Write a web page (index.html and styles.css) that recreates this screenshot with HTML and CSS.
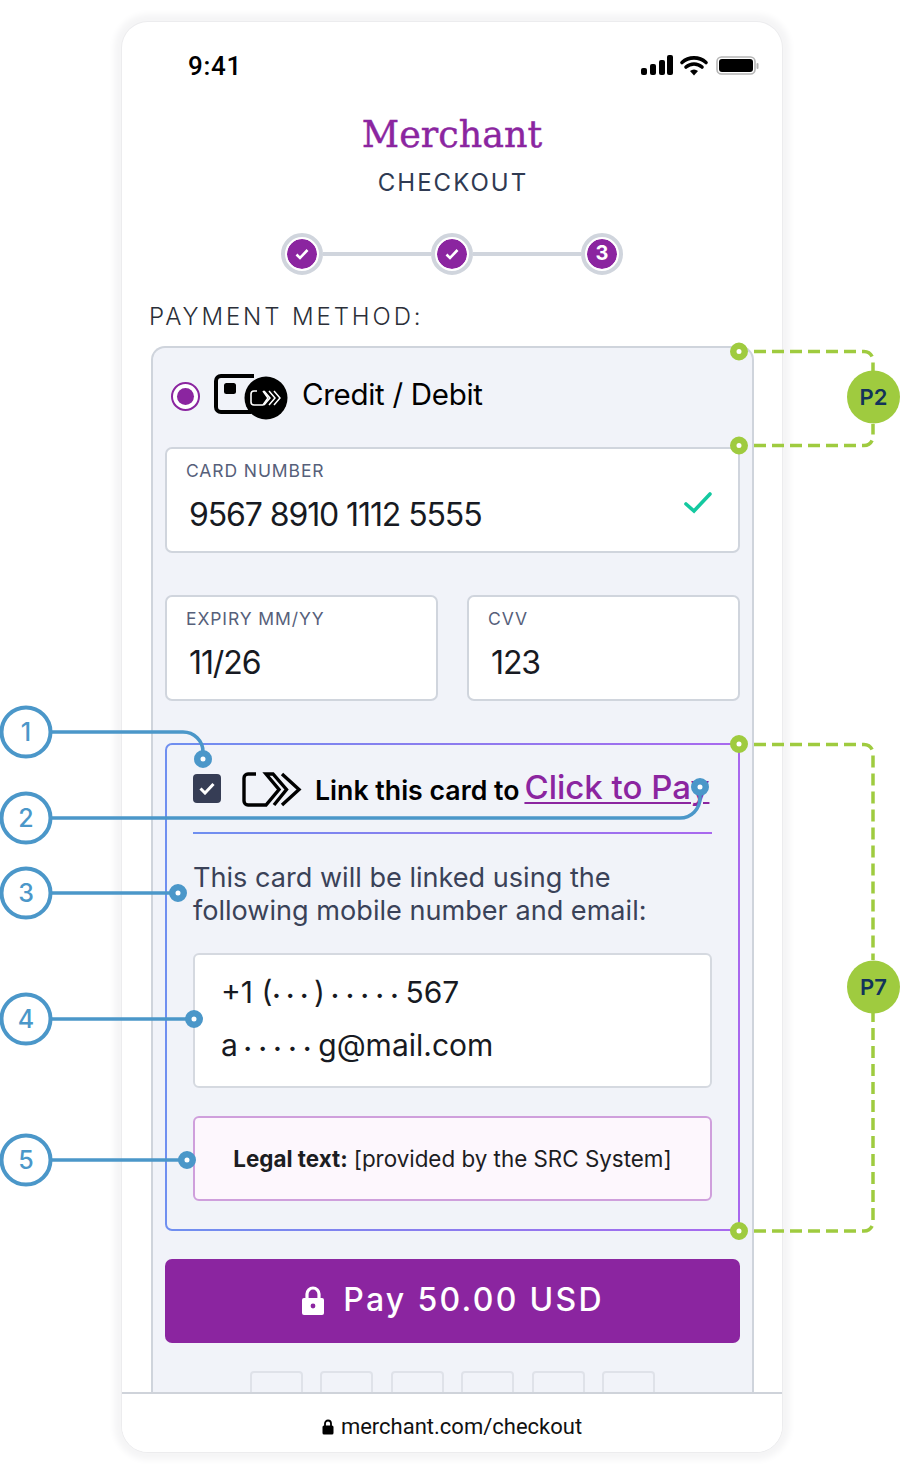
FILE: index.html
```html
<!DOCTYPE html>
<html lang="en">
<head>
<meta charset="utf-8">
<title>Merchant checkout</title>
<link rel="stylesheet" href="styles.css">
</head>
<body>
<main class="canvas">
  <div class="phone">
    <div class="status">
      <span class="time">9:41</span>
      <svg class="status-icons" width="118" height="24" viewBox="0 0 118 24">
        <rect x="0" y="14" width="6" height="7" rx="2" fill="#000"/>
        <rect x="9" y="10" width="6" height="11" rx="2" fill="#000"/>
        <rect x="18" y="6" width="6" height="15" rx="2" fill="#000"/>
        <rect x="26" y="1" width="6" height="20" rx="2" fill="#000"/>
        <path d="M41 8.500a18 18 0 0 1 24 0M45 13a12 12 0 0 1 16 0" fill="none" stroke="#000" stroke-width="3.600" stroke-linecap="round"/>
        <path d="M49 17a6 6 0 0 1 8 0l-4 4.500z" fill="#000"/>
        <rect x="76" y="3" width="38" height="17" rx="4.500" fill="none" stroke="#b5b5b5" stroke-width="1.600"/>
        <rect x="78" y="5" width="34" height="13" rx="3" fill="#000"/>
        <rect x="115.500" y="9" width="2" height="6" rx="1" fill="#b5b5b5"/>
      </svg>
    </div>
    <div class="brand">Merchant</div>
    <div class="subtitle">CHECKOUT</div>
    <div class="stepper">
      <span class="step"><svg width="14" height="12" viewBox="0 0 14 12"><path d="M1.500 6.500l3.500 3.500 7.500-8" fill="none" stroke="#fff" stroke-width="2.600"/></svg></span>
      <span class="step-line"></span>
      <span class="step"><svg width="14" height="12" viewBox="0 0 14 12"><path d="M1.500 6.500l3.500 3.500 7.500-8" fill="none" stroke="#fff" stroke-width="2.600"/></svg></span>
      <span class="step-line"></span>
      <span class="step step-num">3</span>
    </div>
    <div class="section-label">PAYMENT METHOD:</div>

    <section class="panel">
      <div class="method">
        <span class="radio"><span class="radio-dot"></span></span>
        <svg class="card-icon" width="74" height="48" viewBox="0 0 74 48">
          <path d="M40 3H7a5 5 0 0 0-5 5v26a5 5 0 0 0 5 5h30" fill="none" stroke="#000" stroke-width="4"/>
          <rect x="10" y="10" width="12" height="11" rx="2.500" fill="#000"/>
          <circle cx="52" cy="25" r="21.500" fill="#000"/>
          <path d="M43 18h-3a3 3 0 0 0-3 3v8a3 3 0 0 0 3 3h9l5-7-5-7" fill="none" stroke="#fff" stroke-width="1.600"/>
          <path d="M50 18l6 7-6 7M55 18l6 7-6 7M60 18l6 7-6 7" fill="none" stroke="#fff" stroke-width="1.500"/>
        </svg>
        <span class="method-name">Credit / Debit</span>
      </div>

      <div class="field field-wide">
        <span class="field-label">CARD NUMBER</span>
        <span class="field-value">9567 8910 1112 5555</span>
        <svg class="field-check" width="28" height="22" viewBox="0 0 28 22"><path d="M2 12l8 7L26 2" fill="none" stroke="#14c9a0" stroke-width="3.600" stroke-linecap="round"/></svg>
      </div>

      <div class="field-row">
        <div class="field">
          <span class="field-label">EXPIRY MM/YY</span>
          <span class="field-value">11/26</span>
        </div>
        <div class="field">
          <span class="field-label">CVV</span>
          <span class="field-value">123</span>
        </div>
      </div>

      <div class="link-box">
        <div class="link-row">
          <span class="checkbox"><svg width="16" height="13" viewBox="0 0 16 13"><path d="M1.500 6.500l4.500 4.500 8.500-9" fill="none" stroke="#fff" stroke-width="3"/></svg></span>
          <svg class="c2p-logo" width="75" height="50" viewBox="0 0 75 50">
            <path d="M21 10H13a4 4 0 0 0-4 4v23a4 4 0 0 0 4 4h18l13-15.500L31 10h7l13.500 15.500L39 41" fill="none" stroke="#000" stroke-width="3.400"/>
            <path d="M47 10l17 15.500L47 41" fill="none" stroke="#000" stroke-width="3.400"/>
          </svg>
          <span class="link-text">Link this card to</span>
          <a class="link-brand">Click to Pay</a>
        </div>
        <div class="link-rule"></div>
        <p class="link-copy">This card will be linked using the<br>following mobile number and email:</p>
        <div class="contact">
          <span>+1 (<span class="mask mask-in">•••</span>)<span class="mask">•••••</span>567</span>
          <span>a<span class="mask">•••••</span>g@mail.com</span>
        </div>
        <div class="legal"><b>Legal text:</b> [provided by the SRC System]</div>
      </div>

      <button class="pay">
        <svg width="24" height="30" viewBox="0 0 24 30"><path d="M6 13V8a6 6 0 0 1 12 0v5" fill="none" stroke="#fff" stroke-width="3.200"/><path d="M3 12h18a2 2 0 0 1 2 2v13a2 2 0 0 1-2 2H3a2 2 0 0 1-2-2V14a2 2 0 0 1 2-2z" fill="#fff"/><circle cx="12" cy="20" r="2.400" fill="#8b25a0"/></svg>
        <span class="pay-label">Pay 50.00 USD</span>
      </button>

      <div class="logos">
        <span class="logo-slot"></span><span class="logo-slot"></span><span class="logo-slot"></span><span class="logo-slot"></span><span class="logo-slot"></span><span class="logo-slot"></span>
      </div>
    </section>

    <footer class="address">
      <svg width="12" height="16" viewBox="0 0 12 16"><path d="M3 7V4.500a3 3 0 0 1 6 0V7" fill="none" stroke="#000" stroke-width="1.800"/><rect x="0.500" y="6.500" width="11" height="9" rx="1.500" fill="#000"/></svg>
      <span>merchant.com/checkout</span>
    </footer>
  </div>

  <svg class="annotations" width="900" height="1474" viewBox="0 0 900 1474">
    <g class="blue-lines">
      <path d="M52 732H183a20 20 0 0 1 20 20v7"/>
      <path d="M52 818H680a20 20 0 0 0 20-20v-11"/>
      <path d="M52 893H178"/>
      <path d="M52 1019H194"/>
      <path d="M52 1160H187"/>
    </g>
    <g class="blue-ring">
      <circle cx="26" cy="732" r="24.500"/>
      <circle cx="26" cy="818" r="24.500"/>
      <circle cx="26" cy="893" r="24.500"/>
      <circle cx="26" cy="1019" r="24.500"/>
      <circle cx="26" cy="1160" r="24.500"/>
    </g>
    <g class="blue-num">
      <text x="26" y="741">1</text>
      <text x="26" y="827">2</text>
      <text x="26" y="902">3</text>
      <text x="26" y="1028">4</text>
      <text x="26" y="1169">5</text>
    </g>
    <g class="blue-dot">
      <circle cx="203" cy="759" r="5.750"/>
      <circle cx="700" cy="787" r="5.750"/>
      <circle cx="178" cy="893" r="5.750"/>
      <circle cx="194" cy="1019" r="5.750"/>
      <circle cx="187" cy="1160" r="5.750"/>
    </g>
    <g class="green-lines">
      <path d="M754 351.500H864a9 9 0 0 1 9 9V372"/>
      <path d="M754 445.500H864a9 9 0 0 0 9-9V424"/>
      <path d="M754 744.500H864a9 9 0 0 1 9 9V960"/>
      <path d="M754 1231H864a9 9 0 0 0 9-9V1012"/>
    </g>
    <g class="green-dot">
      <circle cx="739" cy="351.500" r="5.750"/>
      <circle cx="739" cy="445.500" r="5.750"/>
      <circle cx="739" cy="744" r="5.750"/>
      <circle cx="739" cy="1231" r="5.750"/>
    </g>
    <g class="green-badge">
      <circle cx="873.500" cy="397" r="26.500"/>
      <circle cx="873.500" cy="987" r="26.500"/>
    </g>
    <g class="badge-text">
      <text x="873.500" y="405">P2</text>
      <text x="873.500" y="995">P7</text>
    </g>
  </svg>
</main>
</body>
</html>
```

FILE: styles.css
```css
* { box-sizing: border-box; }

html, body { margin: 0; background: #fff; }

body { font-family: "Inter", "Liberation Sans", sans-serif; color: #000; }

.canvas {
  position: relative;
  width: 900px;
  height: 1474px;
  padding: 22px 118px 22px 122px;
}

.phone {
  width: 660px;
  height: 1430px;
  display: flex;
  flex-direction: column;
  background: #fff;
  border-radius: 26px;
  box-shadow: 0 0 0 1px #ececee, 0 0 6px 8px #f5f5f6;
  overflow: hidden;
}

.status {
  flex: none;
  height: 88px;
  display: flex;
  align-items: center;
  justify-content: space-between;
  padding: 0 23px 0 66px;
}

.time {
  font: 500 26px/1 "Roboto", "Liberation Sans", sans-serif;
  letter-spacing: 0.700px;
}

.status-icons { display: block; }

.brand {
  flex: none;
  height: 49px;
  text-align: center;
  font: 400 36.500px/50px "DejaVu Serif", "Liberation Serif", serif;
  -webkit-text-stroke: 0.400px #8b25a0;
  color: #8b25a0;
}

.subtitle {
  flex: none;
  height: 48px;
  padding-left: 2px;
  text-align: center;
  font: 400 24px/48px "Inter", sans-serif;
  letter-spacing: 2px;
  color: #2f3a52;
}

.stepper {
  flex: none;
  height: 42px;
  margin-top: 26px;
  display: flex;
  align-items: center;
  justify-content: center;
}

.step {
  width: 42px;
  height: 42px;
  flex: none;
  display: flex;
  align-items: center;
  justify-content: center;
  background: #8b25a0;
  background-clip: padding-box;
  border: 6px solid #fff;
  border-radius: 50%;
  outline: 4px solid #d0d5dd;
  outline-offset: -4px;
  color: #fff;
  font: 700 20px/1 "Inter", sans-serif;
}

.step-num { padding-bottom: 3px; }

.step-line {
  flex: none;
  width: 108px;
  height: 4px;
  background: #d0d5dd;
}

.section-label {
  flex: none;
  margin: 23px 0 10px 27px;
  height: 38px;
  font: 300 24px/38px "Inter", sans-serif;
  letter-spacing: 2.900px;
  color: #2b2f38;
}

.panel {
  flex: 1 1 0;
  min-height: 0;
  margin: 0 28px 0 29px;
  padding: 0 12px;
  background: #f1f3f9;
  border: 2px solid #cfd4dc;
  border-bottom: 0;
  border-radius: 14px 14px 0 0;
  overflow: hidden;
}

.method {
  height: 99px;
  display: flex;
  align-items: center;
  padding: 0 0 2px 6px;
}

.radio {
  width: 29px;
  height: 29px;
  flex: none;
  display: flex;
  align-items: center;
  justify-content: center;
  background: #fff;
  border: 2px solid #8b25a0;
  border-radius: 50%;
}

.radio-dot {
  width: 17px;
  height: 17px;
  background: #8b25a0;
  border-radius: 50%;
}

.card-icon { margin-left: 14px; flex: none; }

.method-name {
  margin: 0 0 5px 14px;
  font-size: 29.500px;
  letter-spacing: -0.300px;
}

.field {
  position: relative;
  display: flex;
  flex-direction: column;
  height: 106px;
  padding: 10px 20px 0 19px;
  background: #fff;
  border: 2px solid #d0d5dd;
  border-radius: 7px;
}

.field-wide { margin-bottom: 42px; }

.field-row {
  display: grid;
  grid-template-columns: 273px 273px;
  column-gap: 29px;
}

.field-label {
  height: 24px;
  font-size: 17.500px;
  line-height: 24px;
  letter-spacing: 0.900px;
  color: #56607a;
}

.field-value {
  margin: 10px 0 0 3px;
  font-size: 32px;
  line-height: 44px;
  letter-spacing: -1.100px;
  color: #171a22;
}

.field-check { position: absolute; right: 26px; top: 43px; }

.link-box {
  height: 488px;
  margin: 42px 0 28px;
  padding: 0 26px;
  background: linear-gradient(#f1f3f9, #f1f3f9) padding-box, linear-gradient(90deg, #6f8ff0, #a968ee) border-box;
  border: 2px solid transparent;
  border-radius: 7px;
}

.link-row {
  height: 87px;
  display: flex;
  align-items: center;
}

.checkbox {
  width: 28px;
  height: 29px;
  flex: none;
  display: flex;
  align-items: center;
  justify-content: center;
  background: #363d55;
  border-radius: 4px;
}

.c2p-logo { flex: none; margin: 0 5px 0 14px; }

.link-text {
  padding-top: 2px;
  font-size: 26.700px;
  font-weight: 600;
  white-space: nowrap;
}

.link-brand {
  margin: 0 0 4px 5px;
  font-size: 33px;
  font-weight: 500;
  color: #8b25a0;
  text-decoration: underline;
  text-decoration-thickness: 2px;
  text-underline-offset: 3px;
  white-space: nowrap;
}

.link-rule {
  height: 2px;
  background: linear-gradient(90deg, #6f8ff0, #a968ee);
}

.link-copy {
  margin: 27px 0 0;
  font-size: 27.100px;
  line-height: 33px;
  color: #3a4258;
  white-space: nowrap;
}

.contact {
  height: 135px;
  margin-top: 26px;
  padding: 15px 26px 0;
  display: flex;
  flex-direction: column;
  gap: 6px;
  background: #fff;
  border: 2px solid #d5d9e0;
  border-radius: 6px;
  font-size: 30px;
  line-height: 44px;
  color: #171a22;
  white-space: nowrap;
}

.mask {
  margin-left: 6px;
  font-size: 14px;
  letter-spacing: 7px;
  vertical-align: 3px;
}

.mask-in { margin-left: 0; letter-spacing: 6px; }

.legal {
  height: 85px;
  margin-top: 28px;
  display: flex;
  align-items: center;
  justify-content: center;
  gap: 6px;
  background: #fdf7fd;
  border: 2px solid #cf9fdc;
  border-radius: 6px;
  font-size: 22.400px;
  color: #1c1d22;
  white-space: nowrap;
}

.legal b { font-weight: 700; }

.pay {
  display: flex;
  align-items: center;
  justify-content: center;
  gap: 18px;
  width: 100%;
  height: 84px;
  padding: 0;
  background: #8b25a0;
  border: 0;
  border-radius: 7px;
  color: #fff;
  font: 500 32px/1 "Inter", sans-serif;
  letter-spacing: 2.300px;
}

.pay-label { padding-bottom: 3px; }

.logos {
  display: flex;
  justify-content: center;
  gap: 17.400px;
  margin-top: 28px;
}

.logo-slot {
  width: 53px;
  height: 40px;
  flex: none;
  border: 2px solid #dfe2e9;
  border-radius: 4px;
}

.address {
  flex: none;
  height: 60px;
  display: flex;
  align-items: center;
  justify-content: center;
  gap: 7px;
  padding: 8px 0 0;
  border-top: 2px solid #cfd3da;
  background: #fff;
  font: 400 22px/1 "Roboto", "Liberation Sans", sans-serif;
  color: #111;
}

.annotations {
  position: absolute;
  left: 0;
  top: 0;
  pointer-events: none;
}

.blue-lines path { fill: none; stroke: #4b97c9; stroke-width: 3.500; }
.blue-ring circle { fill: #fff; stroke: #4b97c9; stroke-width: 4; }
.blue-num text { font: 500 25px "Inter", sans-serif; fill: #4b97c9; text-anchor: middle; }
.blue-dot circle { fill: #fff; stroke: #4b97c9; stroke-width: 6.500; }
.green-lines path { fill: none; stroke: #9fcb3f; stroke-width: 3.500; stroke-dasharray: 12 6; }
.green-dot circle { fill: #fff; stroke: #9fcb3f; stroke-width: 6.500; }
.green-badge circle { fill: #9fcb3f; }
.badge-text text { font: 600 22px "Inter", sans-serif; fill: #12335a; text-anchor: middle; }
```
